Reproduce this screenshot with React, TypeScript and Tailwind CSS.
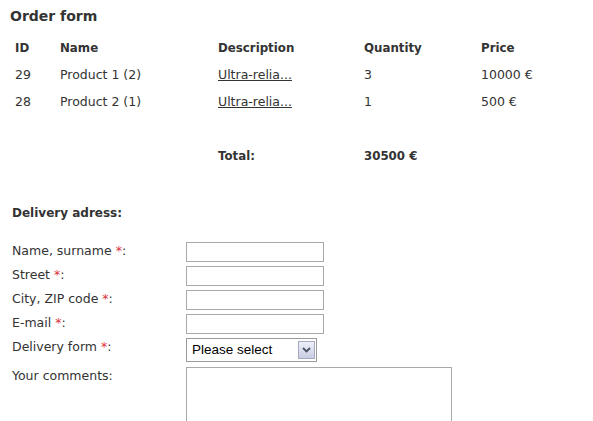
const rows = [
  { id: 29, name: "Product 1 (2)", desc: "Ultra-relia...", qty: 3, price: "10000 €" },
  { id: 28, name: "Product 2 (1)", desc: "Ultra-relia...", qty: 1, price: "500 €" },
];

const Req = () => <span className="text-[#e0303a]">*</span>;

const TextInput = () => (
  <input
    type="text"
    className="block w-[138px] h-[20px] border border-[#a9a9a9] bg-white px-1 outline-none"
  />
);

export default function App() {
  return (
    <div
      className="min-h-[421px] bg-white text-[#333] text-[12.5px] pl-[10px]"
      style={{ fontFamily: '"DejaVu Sans", Verdana, sans-serif' }}
    >
      {/* TITLE */}
      <h1 className="pt-[6px] h-[26px] text-[14px] leading-[20px] font-bold">Order form</h1>

      {/* ORDER TABLE */}
      <table className="mt-[9px] border-collapse">
        <colgroup>
          <col className="w-[50px]" />
          <col className="w-[158px]" />
          <col className="w-[146px]" />
          <col className="w-[117px]" />
          <col className="w-[100px]" />
        </colgroup>
        <thead>
          <tr className="h-[27px] text-left text-[11.8px]">
            <th className="pl-[5px] font-bold">ID</th>
            <th className="font-bold">Name</th>
            <th className="font-bold">Description</th>
            <th className="font-bold">Quantity</th>
            <th className="font-bold">Price</th>
          </tr>
        </thead>
        <tbody>
          {rows.map((r) => (
            <tr key={r.id} className="h-[27px]">
              <td className="pl-[5px]">{r.id}</td>
              <td>{r.name}</td>
              <td>
                <a href="#" className="underline">
                  {r.desc}
                </a>
              </td>
              <td>{r.qty}</td>
              <td>{r.price}</td>
            </tr>
          ))}
          <tr className="h-[27px]">
            <td colSpan={5}></td>
          </tr>
          <tr className="h-[28px] font-bold text-[11.8px]">
            <td></td>
            <td></td>
            <td>Total:</td>
            <td>30500 €</td>
            <td></td>
          </tr>
        </tbody>
      </table>

      {/* DELIVERY */}
      <h2 className="mt-[32px] pl-[2px] h-[20px] leading-[20px] font-bold text-[12px]">Delivery adress:</h2>

      <div className="mt-[19px] pl-[2px]">
        {["Name, surname", "Street", "City, ZIP code", "E-mail"].map((label) => (
          <div key={label} className="flex h-[24px]">
            <label className="w-[174px] leading-[16px] pt-[1px]">
              {label} <Req />:
            </label>
            <TextInput />
          </div>
        ))}

        <div className="flex h-[29px]">
          <label className="w-[174px] leading-[16px] pt-[1px]">
            Delivery form <Req />:
          </label>
          <div className="relative w-[131px] h-[24px]">
            <select
              className="appearance-none block w-full h-full border border-[#9a9a9a] bg-white pl-[5px] text-[13.5px] text-black outline-none"
              style={{ fontFamily: '"Liberation Sans", Arial, sans-serif' }}
              defaultValue=""
            >
              <option value="">Please select</option>
              <option value="post">Post</option>
              <option value="courier">Courier</option>
            </select>
            <div className="pointer-events-none absolute right-[2px] top-[3px] w-[17px] h-[18px] border border-[#a7a9c0] bg-gradient-to-b from-[#eef0fa] to-[#c9cde3] flex items-center justify-center">
              <svg width="9" height="6" viewBox="0 0 9 6">
                <path d="M1 1 L4.5 4.5 L8 1" stroke="#4d5266" strokeWidth="1.8" fill="none" />
              </svg>
            </div>
          </div>
        </div>

        <div className="flex">
          <label className="w-[174px] leading-[16px] pt-[1px]">Your comments:</label>
          <textarea className="block w-[266px] h-[70px] border border-[#a9a9a9] bg-white outline-none resize-none" />
        </div>
      </div>
    </div>
  );
}
